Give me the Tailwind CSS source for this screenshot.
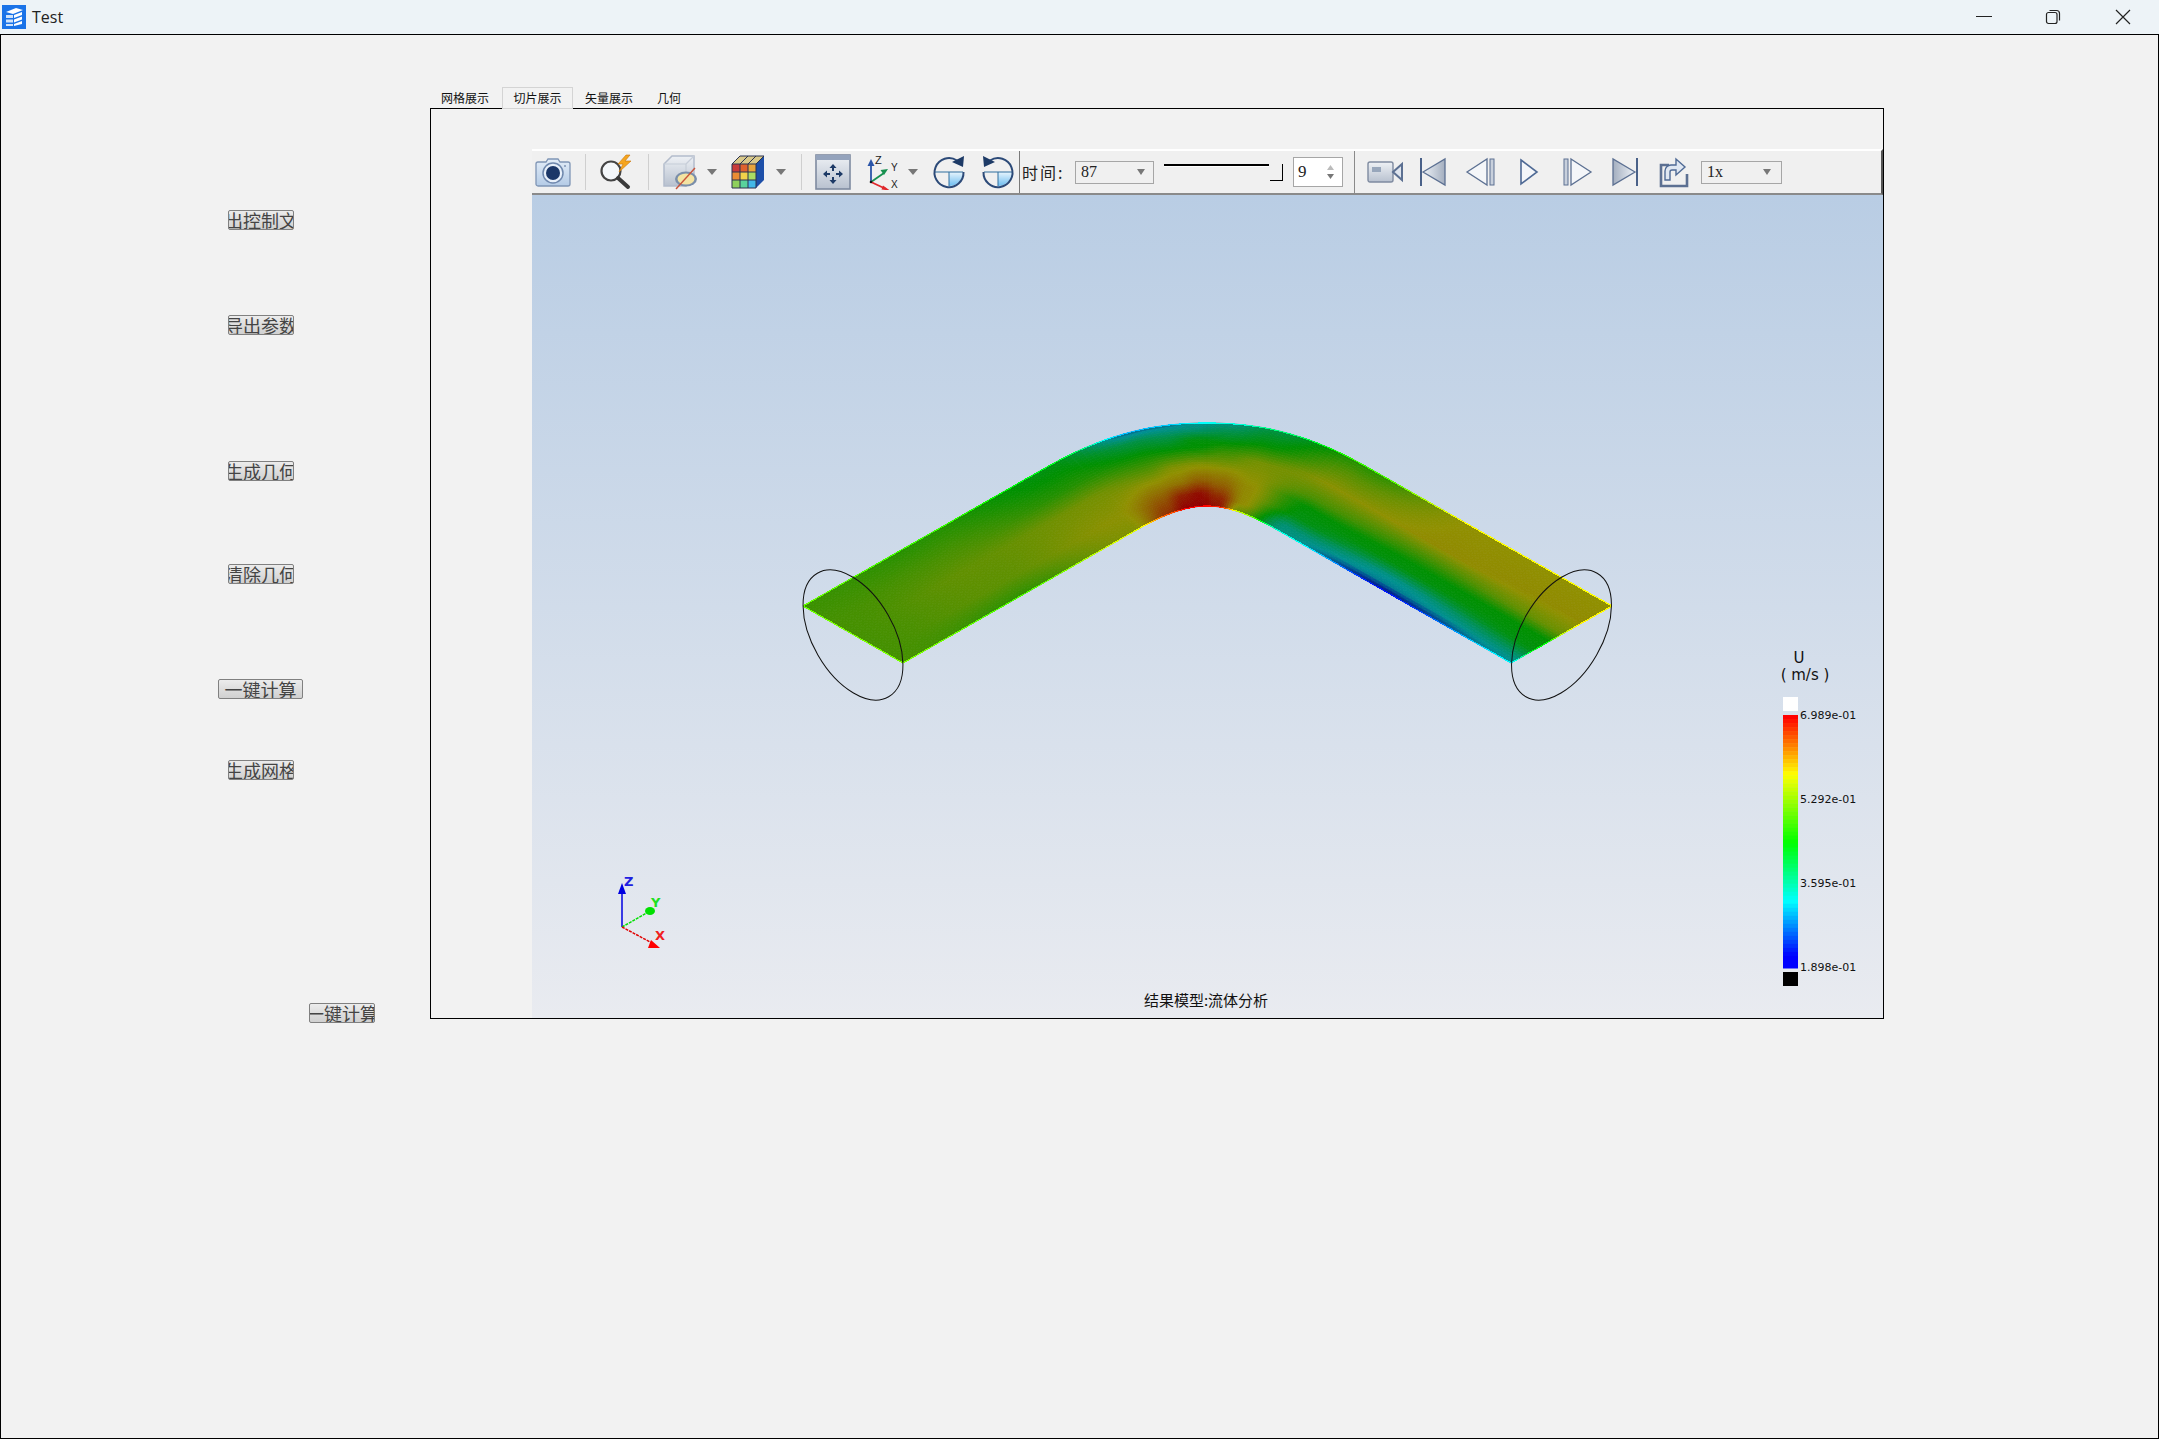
<!DOCTYPE html>
<html lang="zh">
<head>
  <meta charset="UTF-8" />
  <title>Test</title>
  <script src="https://cdn.jsdelivr.net/npm/@tailwindcss/browser@4"></script>
</head>
<body class="bg-[#f2f2f2] overflow-hidden font-['Noto_Sans_CJK_SC',sans-serif]">

  <svg class="absolute w-0 h-0">
    <defs>
      <linearGradient id="camBody" x1="0" y1="0" x2="0" y2="1"><stop offset="0" stop-color="#e3edf8"/><stop offset="1" stop-color="#b4cbe6"/></linearGradient>
      <linearGradient id="gray" x1="0" y1="0" x2="0" y2="1"><stop offset="0" stop-color="#eef1f5"/><stop offset="1" stop-color="#b8c1cf"/></linearGradient>
      <linearGradient id="tri" x1="0" y1="0" x2="1" y2="0"><stop offset="0" stop-color="#eef2f7"/><stop offset="1" stop-color="#a3aebf"/></linearGradient>
      <linearGradient id="triR" x1="1" y1="0" x2="0" y2="0"><stop offset="0" stop-color="#eef2f7"/><stop offset="1" stop-color="#a3aebf"/></linearGradient>
      <linearGradient id="quarter" x1="0" y1="0" x2="0" y2="1"><stop offset="0" stop-color="#e8f5fd"/><stop offset="1" stop-color="#6dbdf0"/></linearGradient>
      <linearGradient id="btn" x1="0" y1="0" x2="0" y2="1"><stop offset="0" stop-color="#eee"/><stop offset="1" stop-color="#ccc"/></linearGradient>
    </defs>
  </svg>

  <div class="w-[2159px] h-[1439px] border-x border-b border-black flex flex-col">

    <!-- title bar -->
    <div class="h-[35px] shrink-0 bg-[#edf3f7] border-b border-black flex items-center -mx-px">
      <svg width="24" height="24" viewBox="0 0 24 24" class="ml-[2px]">
        <rect width="24" height="24" fill="#1a73e8"/>
        <path d="M4 7 L14 3 L21 5 L11 9Z" fill="#fff"/>
        <path d="M4 10h7v3H4zM4 14.500h7v3H4zM4 19h7v2H4z" fill="#cfe3fb"/>
        <path d="M12 10l8-3v3l-8 3zM12 14.500l8-3v3l-8 3zM12 19l8-3v3l-8 2z" fill="#fff"/>
      </svg>
      <span class="ml-[6px] text-[16px] text-[#222] font-['Open_Sans',sans-serif]">Test</span>
      <svg width="16" height="2" class="ml-[1913px]"><rect width="16" height="1" fill="#222"/></svg>
      <svg width="16" height="16" viewBox="0 0 16 16" fill="none" stroke="#222" stroke-width="1.200" class="ml-[53px]">
        <rect x="1.500" y="3.500" width="10.500" height="11" rx="2"/>
        <path d="M4.500 1.500h7a3 3 0 0 1 3 3v7"/>
      </svg>
      <svg width="16" height="16" viewBox="0 0 16 16" fill="none" stroke="#222" stroke-width="1.200" class="ml-[54px]">
        <path d="M1 1l14 14M15 1L1 15"/>
      </svg>
    </div>

    <div class="flex flex-1">
      <!-- left buttons -->
      <div class="w-[429px] shrink-0 text-[18px] leading-none text-[#444]">
        <div class="w-[520px] pl-[227px] pt-[175px] flex flex-col items-start">
          <button class="w-[66px] h-[20px] border border-[#808080] rounded-[2px] bg-linear-to-b from-[#ececec] to-[#d0d0d0] overflow-hidden whitespace-nowrap flex justify-center items-center">出控制文</button>
          <button class="mt-[85px] w-[66px] h-[20px] border border-[#808080] rounded-[2px] bg-linear-to-b from-[#ececec] to-[#d0d0d0] overflow-hidden whitespace-nowrap flex justify-center items-center">导出参数</button>
          <button class="mt-[126px] w-[66px] h-[20px] border border-[#808080] rounded-[2px] bg-linear-to-b from-[#ececec] to-[#d0d0d0] overflow-hidden whitespace-nowrap flex justify-center items-center">生成几何</button>
          <button class="mt-[83px] w-[66px] h-[20px] border border-[#808080] rounded-[2px] bg-linear-to-b from-[#ececec] to-[#d0d0d0] overflow-hidden whitespace-nowrap flex justify-center items-center">清除几何</button>
          <button class="mt-[95px] -ml-[10px] w-[85px] h-[20px] border border-[#808080] rounded-[2px] bg-linear-to-b from-[#ececec] to-[#d0d0d0] overflow-hidden whitespace-nowrap flex justify-center items-center">一键计算</button>
          <button class="mt-[61px] w-[66px] h-[20px] border border-[#808080] rounded-[2px] bg-linear-to-b from-[#ececec] to-[#d0d0d0] overflow-hidden whitespace-nowrap flex justify-center items-center">生成网格</button>
          <button class="mt-[223px] ml-[81px] w-[66px] h-[20px] border border-[#808080] rounded-[2px] bg-linear-to-b from-[#ececec] to-[#d0d0d0] overflow-hidden whitespace-nowrap flex justify-center items-center">一键计算</button>
        </div>
      </div>

      <!-- tabs + frame -->
      <div class="w-[1454px] shrink-0 pt-[52px] flex flex-col">
        <div class="flex h-[21px] text-[12px] text-[#111] relative z-10">
          <div class="px-[11px] flex items-center w-[72px]">网格展示</div>
          <div class="w-[71px] flex items-center justify-center border border-[#d4d4d4] bg-[#f2f2f2] h-[22px]">切片展示</div>
          <div class="w-[72px] flex items-center justify-center">矢量展示</div>
          <div class="w-[48px] flex items-center justify-center">几何</div>
        </div>
        <div class="w-[1454px] h-[911px] border border-black pt-[40px] pl-[101px]">

          <!-- toolbar -->
          <div class="w-[1351px] h-[46px] bg-[#f0f0f0] border-t-2 border-b-2 border-t-white border-b-[#8a8a8a] border-r-2 border-r-[#555] flex items-center text-[#222]">
            <svg width="36" height="36" viewBox="0 0 36 36" class="ml-[3px] shrink-0">
              <path d="M3 8h8l2-3h10l2 3h8a2 2 0 0 1 2 2v20a2 2 0 0 1-2 2H3a2 2 0 0 1-2-2V10a2 2 0 0 1 2-2z" fill="url(#camBody)" stroke="#7f95b5" stroke-width="1.300"/>
              <circle cx="18" cy="19" r="10" fill="#e8f0fa" stroke="#6f88ad" stroke-width="1.500"/>
              <circle cx="18" cy="19" r="7" fill="#1b3768"/>
              <circle cx="30" cy="12" r="1" fill="#7f95b5"/>
            </svg>
            <div class="ml-[14px] w-px h-[36px] bg-[#cfcfcf] shrink-0"></div>
            <svg width="36" height="36" viewBox="0 0 36 36" class="ml-[13px] shrink-0">
              <circle cx="12" cy="17" r="9.500" fill="#f4f7fa" stroke="#444" stroke-width="2.200"/>
              <path d="M19 24l10 9" stroke="#3a3a3a" stroke-width="4" stroke-linecap="round"/>
              <path d="M27 1l-8 9h5l-4 8 12-11h-6l5-6z" fill="#f5a51f" stroke="#c9770c" stroke-width=".6"/>
            </svg>
            <div class="ml-[13px] w-px h-[36px] bg-[#cfcfcf] shrink-0"></div>
            <svg width="36" height="36" viewBox="0 0 36 36" class="ml-[13px] shrink-0">
              <path d="M2 10l8-8h22v22l-8 8H2z" fill="url(#gray)" stroke="#b3bccb" stroke-width="1.500"/>
              <path d="M2 10h22v22M24 10l8-8" fill="none" stroke="#c6cdd8" stroke-width="1.200"/>
              <ellipse cx="24" cy="25" rx="11" ry="7.500" fill="#7a8eaa"/>
              <ellipse cx="24" cy="25" rx="8.500" ry="5.500" fill="#f3e3a2"/>
              <path d="M14 35L33 14" stroke="#c8543a" stroke-width="1.400"/>
            </svg>
            <svg width="10" height="6" viewBox="0 0 10 6" class="ml-[9px] shrink-0"><path d="M0 0h10L5 6z" fill="#777"/></svg>
            <svg width="36" height="36" viewBox="0 0 36 36" class="ml-[13px] shrink-0">
              <path d="M2 10l8-8h24l-8 8z" fill="#d9c98a"/>
              <path d="M26 10l8-8v24l-8 8z" fill="#1d4fa8"/>
              <rect x="2" y="10" width="8" height="8" fill="#c93a3a"/><rect x="10" y="10" width="8" height="8" fill="#e0622e"/><rect x="18" y="10" width="8" height="8" fill="#e8a53c"/>
              <rect x="2" y="18" width="8" height="8" fill="#ea8c34"/><rect x="10" y="18" width="8" height="8" fill="#f2d24a"/><rect x="18" y="18" width="8" height="8" fill="#a9dc63"/>
              <rect x="2" y="26" width="8" height="8" fill="#8ed05c"/><rect x="10" y="26" width="8" height="8" fill="#58d39c"/><rect x="18" y="26" width="8" height="8" fill="#42b8e8"/>
              <path d="M2 10h24v24H2zM10 10v24M18 10v24M2 18h24M2 26h24M26 10l8-8M18 10l8-8M10 10l8-8M2 10l8-8h24" fill="none" stroke="#2b3350" stroke-width="1"/>
            </svg>
            <svg width="10" height="6" viewBox="0 0 10 6" class="ml-[10px] shrink-0"><path d="M0 0h10L5 6z" fill="#777"/></svg>
            <div class="ml-[15px] w-px h-[36px] bg-[#cfcfcf] shrink-0"></div>
            <svg width="36" height="36" viewBox="0 0 36 36" class="ml-[13px] shrink-0">
              <rect x="1" y="1" width="34" height="34" fill="url(#gray)" stroke="#7f8ba0" stroke-width="1.600"/>
              <rect x="1" y="1" width="34" height="5" fill="#94a3bc"/>
              <path d="M18 10l-3.500 4h2.500v3h2v-3h2.500zM18 30l-3.500-4h2.500v-3h2v3h2.500zM8 20l4-3.500v2.500h3v2h-3v2.500zM28 20l-4-3.500v2.500h-3v2h3v2.500z" fill="#1d3a66"/>
            </svg>
            <svg width="36" height="36" viewBox="0 0 36 36" class="ml-[14px] shrink-0">
              <path d="M6 28V9" stroke="#2b55a8" stroke-width="1.800"/><path d="M6 5l-3.500 7h7z" fill="#2b55a8"/>
              <path d="M6 28l13-9" stroke="#179150" stroke-width="1.800"/><path d="M23 15l-7.500 1 3.500 5z" fill="#179150"/>
              <path d="M6 28l15 7" stroke="#e0282c" stroke-width="1.800"/><path d="M25 36.500l-7-5-1.500 4z" fill="#e0282c"/>
              <circle cx="6" cy="28" r="1.300" fill="#111"/>
              <text x="10" y="10" font-size="11" font-family="Liberation Sans" fill="#222">Z</text>
              <text x="26" y="17" font-size="10" font-family="Liberation Sans" fill="#222">Y</text>
              <text x="26" y="34" font-size="10" font-family="Liberation Sans" fill="#222">X</text>
            </svg>
            <svg width="10" height="6" viewBox="0 0 10 6" class="ml-[7px] shrink-0"><path d="M0 0h10L5 6z" fill="#777"/></svg>
            <svg width="36" height="36" viewBox="0 0 36 36" class="ml-[13px] shrink-0">
              <path d="M18 18h14a14 14 0 0 1-14 14z" fill="url(#quarter)"/>
              <path d="M4 18h28M18 18v14" stroke="#2e6f9e" stroke-width="1"/>
              <path d="M26 6.500A14.500 14.500 0 1 0 32.500 18" fill="none" stroke="#2c4a78" stroke-width="2"/>
              <path d="M33 2l-1 11-11-5z" fill="#1d3a66"/>
            </svg>
            <svg width="36" height="36" viewBox="0 0 36 36" class="ml-[13px] shrink-0">
              <path d="M18 18h14a14 14 0 0 1-14 14z" fill="url(#quarter)"/>
              <path d="M4 18h28M18 18v14" stroke="#2e6f9e" stroke-width="1"/>
              <path d="M10 6.500A14.500 14.500 0 1 1 3.500 18" fill="none" stroke="#2c4a78" stroke-width="2"/>
              <path d="M3 2l1 11 11-5z" fill="#1d3a66"/>
            </svg>
            <div class="ml-[3px] w-px self-stretch bg-[#7a7a7a] shrink-0"></div>
            <div class="ml-[2px] w-[42px] text-[16px] tracking-[2px] shrink-0 whitespace-nowrap">时间:</div>
            <div class="ml-[11px] w-[79px] h-[23px] shrink-0 border border-[#a6a6a6] bg-[#f0f0f0] flex items-center justify-between pl-[5px] pr-[8px] text-[16px] font-['Liberation_Serif',serif]">
              87<svg width="8" height="6" viewBox="0 0 8 6"><path d="M0 0h8L4 6z" fill="#777"/></svg>
            </div>
            <!-- slider -->
            <div class="ml-[10px] w-[121px] h-[22px] shrink-0 flex items-start">
              <div class="w-[105px] h-[3px] bg-black mt-[3px] border-b border-white"></div>
              <div class="ml-[1px] w-[13px] h-[17px] mt-[3px] bg-[#f0f0f0] border-r border-b border-black"></div>
            </div>
            <div class="ml-[8px] w-[50px] h-[30px] shrink-0 bg-white border border-[#a6a6a6] flex items-center justify-between pl-[4px] pr-[8px] text-[17px] font-['Liberation_Serif',serif]">
              9<svg width="7" height="14" viewBox="0 0 7 14"><path d="M0 5l3.500-5L7 5z" fill="#bbb"/><path d="M0 9l3.500 5L7 9z" fill="#777"/></svg>
            </div>
            <div class="ml-[11px] w-px self-stretch bg-[#8a8a8a] shrink-0"></div>

            <svg width="36" height="36" viewBox="0 0 36 36" class="ml-[12px] shrink-0">
              <rect x="1" y="8" width="25" height="20" rx="2" fill="url(#gray)" stroke="#7f8ba0" stroke-width="1.400"/>
              <rect x="5" y="13" width="9" height="5" fill="#97a6bb"/>
              <path d="M26 18l9-8v16z" fill="#dfe5ee" stroke="#5c7092" stroke-width="2"/>
            </svg>
            <svg width="36" height="36" viewBox="0 0 36 36" class="ml-[12px] shrink-0">
              <path d="M8 18L30 5v26z" fill="url(#tri)" stroke="#5c7092" stroke-width="1.300"/>
              <rect x="5" y="4" width="2" height="28" fill="#4a6188"/>
            </svg>
            <svg width="36" height="36" viewBox="0 0 36 36" class="ml-[12px] shrink-0">
              <path d="M4 18L24 5v26z" fill="#f4f6f9" stroke="#5c7092" stroke-width="1.300"/>
              <rect x="27" y="5" width="4" height="26" fill="#c8d0dc" stroke="#5c7092" stroke-width="1"/>
            </svg>
            <svg width="36" height="36" viewBox="0 0 36 36" class="ml-[12px] shrink-0">
              <path d="M10 6l16 12-16 12z" fill="#f4f6f9" stroke="#4f6a95" stroke-width="1.600"/>
            </svg>
            <svg width="36" height="36" viewBox="0 0 36 36" class="ml-[12px] shrink-0">
              <rect x="5" y="5" width="4" height="26" fill="#c8d0dc" stroke="#5c7092" stroke-width="1"/>
              <path d="M12 5l20 13-20 13z" fill="#f4f6f9" stroke="#5c7092" stroke-width="1.300"/>
            </svg>
            <svg width="36" height="36" viewBox="0 0 36 36" class="ml-[12px] shrink-0">
              <path d="M28 18L6 5v26z" fill="url(#triR)" stroke="#5c7092" stroke-width="1.300"/>
              <rect x="29" y="4" width="2" height="28" fill="#4a6188"/>
            </svg>
            <svg width="36" height="36" viewBox="0 0 36 36" class="ml-[12px] shrink-0">
              <path d="M14 11H6v21h26V20" fill="none" stroke="#5c7092" stroke-width="2.600"/>
              <path d="M10 26v-9a6 6 0 0 1 6-6h5V5l9 8-9 8v-5h-4a2 2 0 0 0-2 2v8z" fill="#dfe7f2" stroke="#4f6a95" stroke-width="1.400"/>
            </svg>
            <div class="ml-[10px] w-[81px] h-[23px] shrink-0 border border-[#a6a6a6] bg-[#f0f0f0] flex items-center justify-between pl-[5px] pr-[10px] text-[16px] font-['Liberation_Serif',serif]">
              1x<svg width="8" height="6" viewBox="0 0 8 6"><path d="M0 0h8L4 6z" fill="#777"/></svg>
            </div>
          </div>

          <!-- viewport -->
          <div class="w-[1351px] h-[823px] bg-linear-to-b from-[#b9cde4] to-[#e9ebf0] relative">
            <svg id="scene" width="1351" height="823" viewBox="532 195 1351 823" class="block">
              <g id="mesh"></g>
              <g id="edges" shape-rendering="crispEdges"></g>
              <ellipse cx="853" cy="635" rx="71.300" ry="40.400" transform="rotate(60 853 635)" fill="none" stroke="#111" stroke-width="1"/>
              <ellipse cx="1561.500" cy="635" rx="71.300" ry="40.400" transform="rotate(-60 1561.500 635)" fill="none" stroke="#111" stroke-width="1"/>

              <!-- triad -->
              <path d="M622 927V888" stroke="#0000e0" stroke-width="1.500"/>
              <path d="M622 883l-4 11h8z" fill="#0000e0"/>
              <path d="M622 927L650 911" stroke="#00e000" stroke-width="1.500" stroke-dasharray="3 1"/>
              <ellipse cx="650" cy="911" rx="5" ry="4" fill="#00e000"/>
              <path d="M622 927L652 943" stroke="#e00000" stroke-width="1.500" stroke-dasharray="3 1"/>
              <path d="M660 948l-12 0 3-8z" fill="#ff0000"/>
              <text x="624" y="886" font-size="13" font-weight="bold" font-family="DejaVu Sans" fill="#2020e0">Z</text>
              <text x="651" y="907" font-size="13" font-weight="bold" font-family="DejaVu Sans" fill="#20e020">Y</text>
              <text x="655" y="940" font-size="13" font-weight="bold" font-family="DejaVu Sans" fill="#f02020">X</text>

              <!-- legend -->
              <rect x="1783" y="697" width="15" height="14" fill="#fff"/>
              <g id="bar"></g>
              <rect x="1783" y="972" width="15" height="14" fill="#000"/>
              <g font-family="DejaVu Sans" font-size="11" fill="#111">
                <text x="1800" y="719">6.989e-01</text>
                <text x="1800" y="803">5.292e-01</text>
                <text x="1800" y="887">3.595e-01</text>
                <text x="1800" y="971">1.898e-01</text>
              </g>
              <g font-family="DejaVu Sans" font-size="15" fill="#111" text-anchor="middle">
                <text x="1799" y="663">U</text>
                <text x="1805" y="680">( m/s )</text>
              </g>
              <text x="1206" y="1006" font-size="15" fill="#111" text-anchor="middle" font-family="Noto Sans CJK SC">结果模型:流体分析</text>
            </svg>
          </div>
        </div>
      </div>
    </div>
  </div>

  <script>
    // colour map used by the solver view
    const stops = [[0,[0,0,255]],[0.25,[0,255,255]],[0.5,[0,255,0]],[0.75,[255,255,0]],[1,[255,0,0]]];
    function jet(v, k) {
      v = Math.max(0, Math.min(1, v));
      for (let i = 1; i < stops.length; i++) {
        if (v <= stops[i][0]) {
          const a = stops[i-1], b = stops[i];
          const f = (v - a[0]) / (b[0] - a[0]);
          const c = a[1].map((x, j) => Math.round((x + (b[1][j] - x) * f) * k));
          return `rgb(${c[0]},${c[1]},${c[2]})`;
        }
      }
    }

    // pipe outline: two lines joined by two beziers, s goes from -1 to 1
    const outer = [[803,606],[1047,467],[1110,431],[1160,423],[1207,423],[1254,423],[1304,431],[1367,467],[1612,606]];
    const inner = [[903,663],[1133,532],[1160,516],[1185,506],[1207,506],[1229,506],[1254,516],[1281,532],[1511,663]];

    function bez(p0, p1, p2, p3, u) {
      const w = 1 - u;
      return [0, 1].map(i => w*w*w*p0[i] + 3*w*w*u*p1[i] + 3*w*u*u*p2[i] + u*u*u*p3[i]);
    }
    function edgePoint(e, s) {
      if (s < -0.3) { const u = (s + 1) / 0.7; return [e[0][0] + (e[1][0]-e[0][0])*u, e[0][1] + (e[1][1]-e[0][1])*u]; }
      if (s < 0) return bez(e[1], e[2], e[3], e[4], (s + 0.3) / 0.3);
      if (s < 0.3) return bez(e[4], e[5], e[6], e[7], s / 0.3);
      const u = (s - 0.3) / 0.7;
      return [e[7][0] + (e[8][0]-e[7][0])*u, e[7][1] + (e[8][1]-e[7][1])*u];
    }

    // value profiles across the pipe, t = 0 at the outer wall, t = 1 at the inner wall
    const profiles = [
      [-1,    [[0,.60],[.3,.62],[1,.62]]],
      [-0.65, [[0,.56],[.25,.62],[.5,.67],[.8,.66],[1,.58]]],
      [-0.3,  [[0,.47],[.12,.50],[.3,.56],[.5,.70],[.8,.74],[1,.72]]],
      [-0.16, [[0,.18],[.12,.38],[.3,.52],[.6,.74],[.85,.86],[1,.92]]],
      [-0.09, [[0,.20],[.15,.38],[.3,.50],[.5,.72],[.7,.80],[.85,.95],[1,1]]],
      [-0.03, [[0,.25],[.08,.30],[.2,.48],[.3,.50],[.5,.73],[.7,.84],[.85,.98],[1,1]]],
      [0.05,  [[0,.28],[.2,.46],[.35,.60],[.55,.75],[.75,.84],[.9,.94],[1,.97]]],
      [0.14,  [[0,.38],[.2,.50],[.4,.70],[.7,.76],[.9,.76],[1,.68]]],
      [0.3,   [[0,.56],[.15,.65],[.35,.74],[.55,.62],[.65,.50],[.8,.47],[.92,.30],[1,.28]]],
      [0.6,   [[0,.75],[.35,.76],[.52,.60],[.62,.50],[.72,.48],[.85,.27],[.93,.22],[1,.02]]],
      [1,     [[0,.75],[.3,.76],[.5,.68],[.62,.50],[.78,.48],[.92,.30],[1,.24]]]
    ];
    function across(p, t) {
      for (let i = 1; i < p.length; i++) {
        if (t <= p[i][0]) return p[i-1][1] + (p[i][1]-p[i-1][1]) * (t-p[i-1][0]) / (p[i][0]-p[i-1][0]);
      }
      return p[p.length-1][1];
    }
    function field(s, t) {
      for (let i = 1; i < profiles.length; i++) {
        if (s <= profiles[i][0]) {
          const a = profiles[i-1], b = profiles[i];
          const f = (s - a[0]) / (b[0] - a[0]);
          const g = f * f * (3 - 2 * f);
          return across(a[1], t) * (1 - g) + across(b[1], t) * g;
        }
      }
      return across(profiles[profiles.length-1][1], t);
    }
    function pos(s, t) {
      const o = edgePoint(outer, s), n = edgePoint(inner, s);
      return [o[0] + (n[0]-o[0])*t, o[1] + (n[1]-o[1])*t];
    }

    const NS = 220, NT = 36, SHADE = 0.565;
    let html = '';
    for (let i = 0; i < NS; i++) {
      const s0 = -1 + 2*i/NS, s1 = -1 + 2*(i+1)/NS;
      for (let j = 0; j < NT; j++) {
        const t0 = j/NT, t1 = (j+1)/NT;
        const c = jet(field((s0+s1)/2, (t0+t1)/2), SHADE);
        const q = [pos(s0,t0), pos(s1,t0), pos(s1,t1), pos(s0,t1)].map(p => p[0].toFixed(1)+','+p[1].toFixed(1)).join(' ');
        html += `<polygon points="${q}" fill="${c}" stroke="${c}" stroke-width="0.7"/>`;
      }
    }
    document.getElementById('mesh').innerHTML = html;

    let lines = '';
    function seg(a, b, v) {
      lines += `<line x1="${a[0].toFixed(1)}" y1="${a[1].toFixed(1)}" x2="${b[0].toFixed(1)}" y2="${b[1].toFixed(1)}" stroke="${jet(v,1)}" stroke-width="1.2"/>`;
    }
    for (let i = 0; i < NS; i++) {
      const s0 = -1 + 2*i/NS, s1 = -1 + 2*(i+1)/NS;
      seg(pos(s0,0), pos(s1,0), field(s0,0));
      seg(pos(s0,1), pos(s1,1), field(s0,1));
    }
    for (let j = 0; j < NT; j++) {
      seg(pos(-1,j/NT), pos(-1,(j+1)/NT), field(-1,j/NT));
      seg(pos(1,j/NT), pos(1,(j+1)/NT), field(1,j/NT));
    }
    document.getElementById('edges').innerHTML = lines;

    // stepped colour bar
    const barStops = [[0,[255,0,0]],[0.23,[255,255,0]],[0.506,[0,255,0]],[0.74,[0,255,255]],[0.96,[0,0,255]],[1,[0,0,255]]];
    let bar = '';
    const STEPS = 63, H = 253 / STEPS;
    for (let i = 0; i < STEPS; i++) {
      const f = i / (STEPS - 1);
      let c = [0,0,255];
      for (let k = 1; k < barStops.length; k++) {
        if (f <= barStops[k][0]) {
          const a = barStops[k-1], b = barStops[k], u = (f-a[0])/(b[0]-a[0]);
          c = a[1].map((x,j) => Math.round(x + (b[1][j]-x)*u));
          break;
        }
      }
      bar += `<rect x="1783" y="${(715 + i*H).toFixed(2)}" width="15" height="${(H+0.5).toFixed(2)}" fill="rgb(${c})"/>`;
    }
    document.getElementById('bar').innerHTML = bar;
  </script>
</body>
</html>
